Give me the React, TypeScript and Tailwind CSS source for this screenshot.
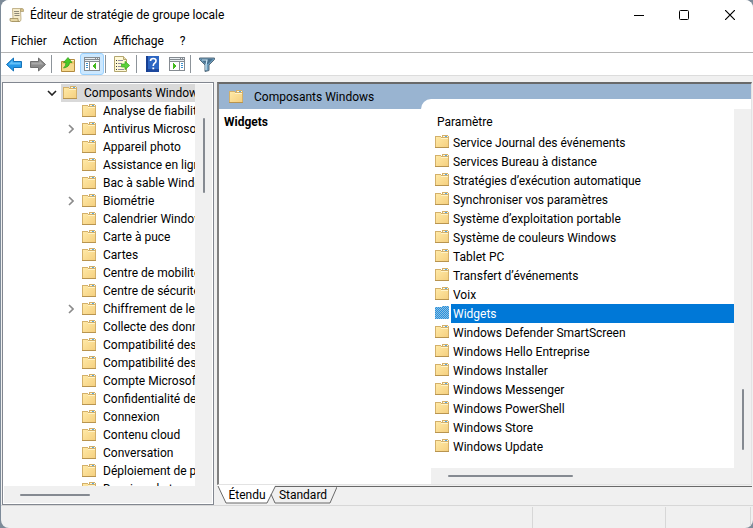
import type { ReactNode } from 'react';

type TreeEntry = { name: string; expandable?: boolean };

const treeEntries: TreeEntry[] = [
  { name: 'Analyse de fiabilité' },
  { name: 'Antivirus Microsoft', expandable: true },
  { name: 'Appareil photo' },
  { name: 'Assistance en ligne' },
  { name: 'Bac à sable Windows' },
  { name: 'Biométrie', expandable: true },
  { name: 'Calendrier Windows' },
  { name: 'Carte à puce' },
  { name: 'Cartes' },
  { name: 'Centre de mobilité' },
  { name: 'Centre de sécurité' },
  { name: 'Chiffrement de lecteur', expandable: true },
  { name: 'Collecte des données' },
  { name: 'Compatibilité des' },
  { name: 'Compatibilité des' },
  { name: 'Compte Microsoft' },
  { name: 'Confidentialité de' },
  { name: 'Connexion' },
  { name: 'Contenu cloud' },
  { name: 'Conversation' },
  { name: 'Déploiement de p' },
  { name: 'Dossiers de travail' },
];

const settings = [
  'Service Journal des événements',
  'Services Bureau à distance',
  'Stratégies d’exécution automatique',
  'Synchroniser vos paramètres',
  'Système d’exploitation portable',
  'Système de couleurs Windows',
  'Tablet PC',
  'Transfert d’événements',
  'Voix',
  'Widgets',
  'Windows Defender SmartScreen',
  'Windows Hello Entreprise',
  'Windows Installer',
  'Windows Messenger',
  'Windows PowerShell',
  'Windows Store',
  'Windows Update',
];

function Folder({ selected = false }: { selected?: boolean }) {
  return (
    <svg width="14" height="14" viewBox="0 0 14 14" className="shrink-0" shapeRendering="crispEdges" aria-hidden="true">
      <defs>
        <linearGradient id="folderFill" x1="0" y1="0" x2="1" y2="1">
          <stop offset="0" stopColor="#ffe9a6" />
          <stop offset="1" stopColor="#f5d080" />
        </linearGradient>
        <pattern id="folderDots" width="2" height="2" patternUnits="userSpaceOnUse">
          <path d="M0 0h2v2H0z" fill="#8fc0e0" />
          <path d="M0 0h1v1H0zM1 1h1v1H1z" fill="#2590e0" />
        </pattern>
      </defs>
      <path d="M0 1h6v1h1V0h6v1h1v12H0z" fill="#d3b06a" />
      <path d="M1 2h5v1h7v9H1z" fill="url(#folderFill)" />
      <path d="M8 1h5v1H8z" fill="#fff8dc" />
      <path d="M10 1h2v1h-2z" fill="#5aa9e6" />
      <path d="M6 3h7v1H6z" fill="#fff3c8" />
      <path d="M0 12h14v1H0z" fill="#b8944f" />
      {selected && <path d="M0 1h6l1-1h6l1 1v12H0z" fill="url(#folderDots)" />}
    </svg>
  );
}

function ScrollIcon() {
  return (
    <svg width="16" height="16" viewBox="0 0 16 16" aria-hidden="true">
      <path d="M3.500 1.500h9q-1 0-1 1.500l.5 9q0 2.500-1.500 2.500H3L4 12z" fill="#f6eccb" stroke="#b5a577" strokeWidth=".8" />
      <path d="M11.500 4.500V3q0-1.500 1.500-1.500T14.500 3v1.500z" fill="#d9c48c" stroke="#a8986a" strokeWidth=".7" />
      <path d="M1 11.500h8V13q0 1.500 1.500 1.500h-8Q1 14.500 1 13z" fill="#e6d6a4" stroke="#a08e5c" strokeWidth=".8" />
      <path d="M5 4.500h5M5.300 6.500h5M5.500 8.500h5" stroke="#8f8a78" />
    </svg>
  );
}

function Arrow({ forward = false }: { forward?: boolean }) {
  return (
    <svg width="16" height="16" viewBox="0 0 16 16" aria-hidden="true">
      {forward ? (
        <>
          <path d="M15.500 8.500 8.500 2v3.500h-8v6h8V15z" fill="#8b8b8b" stroke="#707070" />
          <path d="M1.500 6.500h8V4.300l4 4.200h-12z" fill="#aaa" />
        </>
      ) : (
        <>
          <path d="M.5 8.500 7.500 2v3.500h8v6h-8V15z" fill="#2699e8" stroke="#1673b8" />
          <path d="M14.500 6.500h-8V4.300l-4 4.200h12z" fill="#65c1f7" />
        </>
      )}
    </svg>
  );
}

function FolderUp() {
  return (
    <svg width="14" height="16" viewBox="0 0 14 16" aria-hidden="true">
      <path d="M.5 5.500H6L8 3.500h5.500v12H.5z" fill="#efc96f" stroke="#b38b3f" />
      <path d="M9 4.500h4" stroke="#fff4c9" />
      <path d="M1 8h12v7H1z" fill="#f6d98c" />
      <path d="M2.500 12q2.500-2 2.500-5.500H2.500L7 1.500l4 5H8.500Q8.500 11 2.500 12z" fill="#48c928" stroke="#319b18" strokeWidth=".7" />
    </svg>
  );
}

function PaneIcon({ mirrored = false }: { mirrored?: boolean }) {
  return (
    <svg width="16" height="14" viewBox="0 0 16 14" shapeRendering="crispEdges" aria-hidden="true">
      <path d="M0 0h16v14H0z" fill="#858b91" />
      <path d="M1 1h10v1H1zM12 1h1v1h-1zM14 1h1v1h-1zM1 3h14v1H1z" fill="#e9eef2" />
      {mirrored ? (
        <>
          <path d="M1 5h9v8H1zM11 5h4v8h-4z" fill="#fff" />
          <path d="M4 6h1v1h1v1h1v2H6v1H5v1H4z" fill="#42b91d" />
          <path d="M12 6h2v1h-2zM12 8h2v1h-2zM12 10h2v1h-2z" fill="#3d91ce" />
        </>
      ) : (
        <>
          <path d="M1 5h4v8H1zM6 5h9v8H6z" fill="#fff" />
          <path d="M12 6h-1v1h-1v1H9v2h1v1h1v1h1z" fill="#42b91d" />
          <path d="M2 6h2v1H2zM2 8h2v1H2zM2 10h2v1H2z" fill="#3d91ce" />
        </>
      )}
    </svg>
  );
}

function ExportIcon() {
  return (
    <svg width="16" height="16" viewBox="0 0 16 16" aria-hidden="true">
      <path d="M.5.5h9l3 3v12H.5z" fill="#fff9d7" stroke="#b3a66f" />
      <path d="M9.500.5v3h3" fill="#e9ddb0" stroke="#b3a66f" />
      <path d="M2 4h1v1H2zM2 7h1v1H2zM2 10h1v1H2zM2 13h1v1H2z" fill="#333" />
      <path d="M4 4.500h5M4 7.500h4M4 10.500h3M4 13.500h6" stroke="#8f8ba0" />
      <path d="M7.500 8H11V5.300l4.600 4.200-4.600 4.200V11H7.500z" fill="#5bd13b" stroke="#39a71d" strokeWidth=".7" />
    </svg>
  );
}

function HelpIcon() {
  return (
    <svg width="14" height="16" viewBox="0 0 14 16" aria-hidden="true">
      <path d="M0 0h13v16H0z" fill="#2d66c3" />
      <path d="M0 0h2v16H0z" fill="#173f92" />
      <path d="M2 13h11v3H2z" fill="#1d489d" />
      <path d="M4.500 5q0-2.500 2.800-2.500T10 5q0 1.300-1.300 2.200T7.300 9.500V10" fill="none" stroke="#fff" strokeWidth="1.600" />
      <path d="M6.400 11.400h1.800v1.800H6.400z" fill="#fff" />
    </svg>
  );
}

function FunnelIcon() {
  return (
    <svg width="16" height="16" viewBox="0 0 16 16" aria-hidden="true">
      <path d="M.5 2h15v1.500L10 9v5.500L6 15.500V9L.5 3.500z" fill="#6a9cbd" stroke="#566b7b" />
      <path d="M2 3h12L9 8H6z" fill="#49718f" />
      <path d="M3 4h5L7 9v5" fill="none" stroke="#cfe9f7" strokeWidth="1.200" />
    </svg>
  );
}

function ToolButton({ label, active = false, children }: { label: string; active?: boolean; children: ReactNode }) {
  return (
    <button
      type="button"
      aria-label={label}
      aria-pressed={active}
      className={
        active
          ? 'flex h-[22px] w-6 items-center justify-center rounded-[3px] border border-[#99d1ff] bg-[#cce8ff]'
          : 'flex h-[22px] w-6 items-center justify-center'
      }
    >
      {children}
    </button>
  );
}

const Separator = () => <span className="h-[18px] w-px bg-[#8d949a]" />;

function Chevron({ open = false }: { open?: boolean }) {
  return open ? (
    <svg width="10" height="6" viewBox="0 0 10 6" aria-hidden="true">
      <path d="m1 1 4 4 4-4" fill="none" stroke="#222" strokeWidth="1.600" />
    </svg>
  ) : (
    <svg width="6" height="10" viewBox="0 0 6 10" aria-hidden="true">
      <path d="m1 1 4 4-4 4" fill="none" stroke="#8b8b8b" strokeWidth="1.600" />
    </svg>
  );
}

function TreePane() {
  return (
    <nav aria-label="Arborescence" className="flex w-[212px] shrink-0 flex-col border border-[#828790] bg-white p-px">
      <div className="flex min-h-0 flex-1">
        <ul role="tree" className="min-w-0 flex-1 overflow-hidden whitespace-nowrap">
          <li role="treeitem" aria-expanded="true" className="flex h-[18px] items-center">
            <span className="flex w-[57px] shrink-0 justify-end pr-1">
              <Chevron open />
            </span>
            <button type="button" className="flex h-[18px] flex-1 items-center gap-[7px] bg-[#d9d9d9] pl-0.5">
              <Folder />
              Composants Windows
            </button>
          </li>
          {treeEntries.map((entry, i) => (
            <li role="treeitem" key={i} className="flex h-[18px] items-center">
              <span className="flex w-[78px] shrink-0 justify-end pr-2">{entry.expandable && <Chevron />}</span>
              <button type="button" className="flex h-[18px] items-center gap-[7px]">
                <Folder />
                {entry.name}
              </button>
            </li>
          ))}
        </ul>
        <div className="w-[17px] shrink-0 bg-[#f0f0f0] pt-[34px] pl-2">
          <div className="h-[75px] w-0.5 rounded-full bg-[#858a91]" />
        </div>
      </div>
      <div className="h-[17px] shrink-0 bg-[#f0f0f0] pt-2 pl-4">
        <div className="h-0.5 w-[70px] rounded-full bg-[#858a91]" />
      </div>
    </nav>
  );
}

function DetailPane() {
  return (
    <main className="flex min-w-0 flex-1 flex-col">
      <section className="flex min-h-0 flex-1 flex-col border-t-2 border-r border-b border-l-2 border-t-[#696969] border-r-[#e3e3e3] border-b-[#e3e3e3] border-l-[#808080] bg-white">
        <header className="flex h-[25px] shrink-0 items-start bg-[#99b4d1]">
          <h1 className="flex h-[26px] w-[202px] items-center gap-[11px] pl-2.5">
            <Folder />
            Composants Windows
          </h1>
          <div className="h-2.5 flex-1 self-end rounded-tl-[10px] bg-white" />
        </header>
        <div className="flex min-h-0 flex-1">
          <h2 className="w-[212px] shrink-0 pt-1 pl-[5px] font-bold">Widgets</h2>
          <div className="flex min-w-0 flex-1 flex-col">
            <div className="flex min-h-0 flex-1">
              <div className="min-w-0 flex-1 overflow-hidden">
                <div id="column-name" className="h-6 pt-1 pl-1.5">Paramètre</div>
                <ul role="listbox" aria-labelledby="column-name" className="pl-1">
                  {settings.map((name) => (
                    <li key={name} role="option" aria-selected={name === 'Widgets'} className="flex h-[19px] gap-0.5">
                      <span className="pt-0.5">
                        <Folder selected={name === 'Widgets'} />
                      </span>
                      <span className={name === 'Widgets' ? 'flex-1 bg-[#0078d7] pt-px pl-0.5 text-white' : 'flex-1 pt-px pl-0.5'}>
                        {name}
                      </span>
                    </li>
                  ))}
                </ul>
              </div>
              <div className="flex w-[17px] shrink-0 items-end bg-[#f0f0f0] pb-[18px] pl-2">
                <div className="h-[61px] w-0.5 rounded-full bg-[#858a91]" />
              </div>
            </div>
            <div className="h-4 shrink-0 bg-[#f0f0f0] pt-[7px] pl-[17px]">
              <div className="h-0.5 w-[125px] rounded-full bg-[#858a91]" />
            </div>
          </div>
        </div>
      </section>
      <div role="tablist" className="relative flex h-5 shrink-0 pl-0.5">
        <div className="absolute inset-x-0 top-px ml-[57px] h-px bg-[#696969]" />
        <svg width="120" height="20" viewBox="0 0 120 20" className="absolute top-0 left-0" aria-hidden="true">
          <path d="M0 0h58v1L50 18H9L1 1z" fill="#fff" />
          <path d="m1 1 8 17h41l8-16M54 9l4 9h55l7-16" fill="none" stroke="#696969" />
        </svg>
        <button type="button" role="tab" aria-selected="true" className="relative flex w-14 items-center justify-center">Étendu</button>
        <button type="button" role="tab" aria-selected="false" className="relative flex w-14 items-center justify-center">Standard</button>
      </div>
    </main>
  );
}

export default function App() {
  return (
    <div className="h-screen bg-[#7d8b99] pl-px font-['Roboto','Noto_Sans',sans-serif] text-[12px] leading-[18px] text-black">
      <div className="flex h-full flex-col overflow-hidden rounded-lg bg-[#f0f0f0]">
        <header className="flex h-[30px] shrink-0 items-center bg-white pl-2">
          <ScrollIcon />
          <span className="flex-1 pl-[5px]">Éditeur de stratégie de groupe locale</span>
          <button type="button" aria-label="Réduire" className="flex h-7 w-11 items-center justify-center">
            <svg width="10" height="10"><path d="M0 5.500h10" stroke="#000" /></svg>
          </button>
          <button type="button" aria-label="Agrandir" className="flex h-7 w-[46px] items-center justify-center">
            <svg width="10" height="10"><rect x=".5" y=".5" width="9" height="9" rx="1" fill="none" stroke="#000" /></svg>
          </button>
          <button type="button" aria-label="Fermer" className="flex h-7 w-[46px] items-center justify-center">
            <svg width="10" height="10"><path d="m0 0 10 10M10 0 0 10" stroke="#000" strokeWidth="1.200" /></svg>
          </button>
        </header>
        <nav aria-label="Menus" className="flex h-[23px] shrink-0 gap-4 border-b border-[#b4b4b4] bg-white pl-2.5">
          <button type="button">Fichier</button>
          <button type="button">Action</button>
          <button type="button">Affichage</button>
          <button type="button">?</button>
        </nav>
        <div role="toolbar" aria-label="Outils" className="flex h-[23px] shrink-0 items-end border-b border-[#dcdcdc] bg-white pl-px">
          <div className="flex items-center">
            <ToolButton label="Précédent"><Arrow /></ToolButton>
            <ToolButton label="Suivant"><Arrow forward /></ToolButton>
            <span className="w-px" />
            <Separator />
            <span className="w-1" />
            <ToolButton label="Dossier parent"><FolderUp /></ToolButton>
            <ToolButton label="Afficher l’arborescence" active><PaneIcon /></ToolButton>
            <span className="w-px" />
            <Separator />
            <span className="w-1" />
            <ToolButton label="Exporter la liste"><ExportIcon /></ToolButton>
            <span className="w-0.5" />
            <Separator />
            <span className="w-1" />
            <ToolButton label="Aide"><HelpIcon /></ToolButton>
            <ToolButton label="Afficher le volet d’actions"><PaneIcon mirrored /></ToolButton>
            <span className="w-px" />
            <Separator />
            <span className="w-1" />
            <ToolButton label="Filtrer"><FunnelIcon /></ToolButton>
          </div>
        </div>
        <div className="flex min-h-0 flex-1 gap-[3px] pt-1.5 pr-px pl-px">
          <TreePane />
          <DetailPane />
        </div>
        <footer className="flex h-[23px] shrink-0 justify-end border-t border-[#d7d7d7] pt-px pr-0.5">
          <span className="w-[133px] border-l border-[#d7d7d7]" />
          <span className="w-[86px] border-x border-[#d7d7d7]" />
        </footer>
      </div>
    </div>
  );
}
